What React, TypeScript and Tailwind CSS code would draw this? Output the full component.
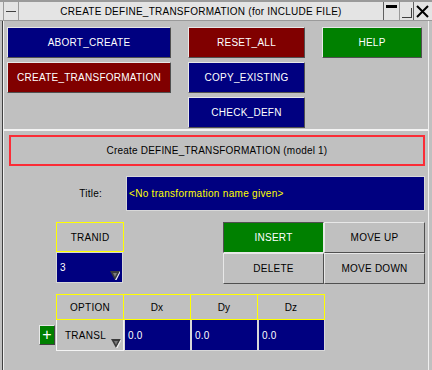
import React from "react";

const FONT = { fontFamily: '"Liberation Sans", Arial, sans-serif' };

type Tone = "blue" | "red" | "green" | "gray";

const toneClass: Record<Tone, string> = {
  blue: "bg-[#000080] text-white",
  red: "bg-[#800000] text-white",
  green: "bg-[#008000] text-white",
  gray: "bg-[#c0c0c0] text-black",
};

function RaisedButton({ label, tone, className = "", sunken = false }: { label: string; tone: Tone; className?: string; sunken?: boolean }) {
  return (
    <div
      className={
        "flex items-center justify-center text-[10px] tracking-[0.25px] border " +
        (sunken
          ? "border-t-[#505050] border-l-[#505050] border-b-[#e8e8e8] border-r-[#e8e8e8] "
          : "border-t-[#e8e8e8] border-l-[#e8e8e8] border-b-[#505050] border-r-[#505050] ") +
        toneClass[tone] +
        " " +
        className
      }
    >
      {label}
    </div>
  );
}

function DropArrow() {
  return (
    <svg width="10" height="9" viewBox="0 0 10 9" className="absolute right-[2px] bottom-[2px]">
      <polygon points="0,0 10,0 5,9" fill="#3a3a3a" />
      <polygon points="10,0 5,9 6.5,9 10,2" fill="#f0f0f0" />
      <polygon points="3,2 7,2 5,6" fill="#7a7a7a" />
    </svg>
  );
}

function HeaderCell({ label, className = "" }: { label: string; className?: string }) {
  return (
    <div className={"flex items-center justify-center border border-[#ffff00] text-[10px] tracking-[0.25px] text-black " + className}>
      {label}
    </div>
  );
}

function ValueCell({ value, className = "", drop = false }: { value: string; className?: string; drop?: boolean }) {
  return (
    <div className={"relative flex items-center pl-[3px] bg-[#000080] border border-[#d8d8d8] text-white text-[10px] tracking-[0.25px] " + className}>
      {value}
      {drop && <DropArrow />}
    </div>
  );
}

export default function App() {
  return (
    <div className="w-[432px] h-[370px] bg-[#c0c0c0] overflow-hidden flex flex-col" style={FONT}>
      {/* title bar */}
      <div className="h-[21px] flex bg-[#e4e4e4] border-t-[2px] border-t-[#9a9a9a] border-b border-b-[#9a9a9a]">
        <div className="w-[3px] bg-[#e4e4e4]" />
        <div className="w-[16px] flex items-center justify-center border-l border-r border-[#9a9a9a]">
          <div className="w-[10px] h-px bg-[#404040]" />
        </div>
        <div className="flex-1 flex items-center justify-center text-[10px] tracking-[0.25px] text-black">
          CREATE DEFINE_TRANSFORMATION (for INCLUDE FILE)
        </div>
        <div className="w-[16px] flex items-start justify-center pt-[3px] border-l border-[#606060]">
          <div className="w-[11px] h-[3px] bg-black" />
        </div>
        <div className="w-[14px] relative border-l border-[#9a9a9a]">
          <div className="absolute right-[1px] bottom-[2px] w-[10px] h-[10px] border-r border-b border-[#404040]" />
        </div>
        <div className="w-[17px] flex items-center justify-center border-l border-[#606060]">
          <svg width="13" height="13" viewBox="0 0 13 13">
            <path d="M1 1 L12 12 M12 1 L1 12" stroke="#000" strokeWidth="2" />
          </svg>
        </div>
        <div className="w-[2px]" />
      </div>

      {/* body */}
      <div className="flex-1 flex pl-[2px]">
        <div className="flex-1 flex flex-col border-l border-l-[#404040]">
          <div className="flex-1 flex flex-col border-l border-l-[#f0f0f0] border-r border-r-[#f0f0f0] mr-[3px]">
            <div className="grid grid-cols-[164px_117px_100px] gap-x-[17px] gap-y-[4px] pl-[3px] pt-[6px]">
              <RaisedButton label="ABORT_CREATE" tone="blue" className="h-[31px]" />
              <RaisedButton label="RESET_ALL" tone="red" className="h-[31px]" />
              <RaisedButton label="HELP" tone="green" className="h-[31px]" />
              <RaisedButton label="CREATE_TRANSFORMATION" tone="red" className="h-[31px]" />
              <RaisedButton label="COPY_EXISTING" tone="blue" className="h-[31px]" />
              <div />
              <div />
              <RaisedButton label="CHECK_DEFN" tone="blue" className="h-[31px]" />
            </div>

            <div className="h-[2px] bg-[#f4f4f4] mt-[1px]" />

            <div className="pl-[5px] pt-[4px] flex flex-col">
              <div className="w-[416px] h-[31px] border-2 border-red-500 flex items-center justify-center text-[10px] tracking-[0.2px] text-black">
                Create DEFINE_TRANSFORMATION (model 1)
              </div>

              <div className="flex items-center mt-[10px] h-[35px]">
                <div className="w-[117px] text-right pr-[24px] text-[10px] tracking-[0.25px] text-black">Title:</div>
                <div className="w-[299px] h-[35px] bg-[#000080] border border-[#d8d8d8] flex items-center pl-[2px] text-[10px] text-[#ffff00] tracking-[0.3px]">
                  &lt;No transformation name given&gt;
                </div>
              </div>

              <div className="flex mt-[11px]">
                <div className="ml-[47px] flex flex-col w-[68px]">
                  <HeaderCell label="TRANID" className="h-[30px]" />
                  <ValueCell value="3" className="h-[31px] w-[67px]" drop />
                </div>
                <div className="ml-[99px] grid grid-cols-[101px_101px] grid-rows-[31px_31px]">
                  <RaisedButton label="INSERT" tone="green" sunken />
                  <RaisedButton label="MOVE UP" tone="gray" />
                  <RaisedButton label="DELETE" tone="gray" />
                  <RaisedButton label="MOVE DOWN" tone="gray" />
                </div>
              </div>

              <div className="flex mt-[10px]">
                <div className="w-[47px] flex justify-end items-start pt-[31px] pr-[1px]">
                  <div className="w-[16px] h-[20px] bg-[#008000] border border-t-[#e8e8e8] border-l-[#e8e8e8] border-b-[#404040] border-r-[#404040] flex items-center justify-center text-white text-[16px] leading-none">
                    +
                  </div>
                </div>
                <div className="grid grid-cols-[68px_67px_67px_67px] grid-rows-[26px_31px]">
                  <HeaderCell label="OPTION" />
                  <HeaderCell label="Dx" className="border-l-0" />
                  <HeaderCell label="Dy" className="border-l-0" />
                  <HeaderCell label="Dz" className="border-l-0" />
                  <div className="relative flex items-center pl-[8px] border border-[#f4f4f4] border-t-0 text-[10px] tracking-[0.25px] text-black">
                    TRANSL
                    <DropArrow />
                  </div>
                  <ValueCell value="0.0" className="border-t-0" />
                  <ValueCell value="0.0" className="border-t-0" />
                  <ValueCell value="0.0" className="border-t-0" />
                </div>
              </div>
            </div>
          </div>
        </div>
      </div>
    </div>
  );
}
